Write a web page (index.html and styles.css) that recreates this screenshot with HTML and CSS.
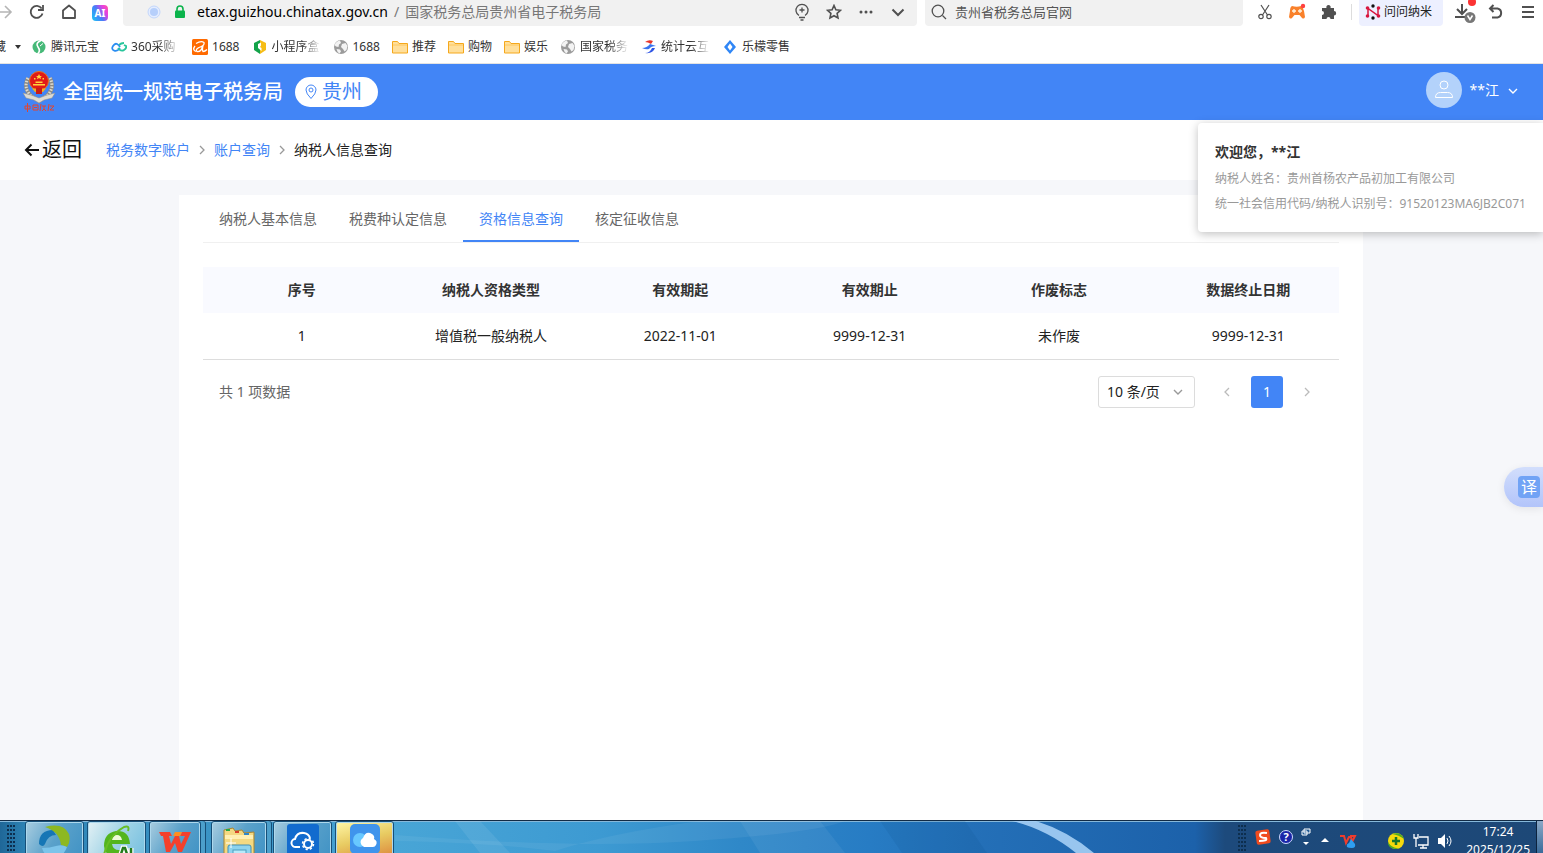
FILE: index.html
```html
<!DOCTYPE html>
<html lang="zh-CN">
<head>
  <meta charset="UTF-8">
  <meta name="viewport" content="width=device-width, initial-scale=1.0">
  <title>纳税人信息查询</title>
  <link rel="stylesheet" href="styles.css">
</head>
<body>
  <svg width="0" height="0" class="defs" aria-hidden="true">
    <symbol id="folder" viewBox="0 0 16 16"><path d="M.5 2.500h5l1.500 2h8.500V14H.5z" fill="#ffdf9b" stroke="#f5a81c"/><path d="M1 6h14" stroke="#ffc85e"/></symbol>
    <symbol id="globe" viewBox="0 0 16 16"><circle cx="8" cy="8" r="7" fill="#9b9b9b"/><path d="M1.500 6Q3 2 7 1.500L8 4 6 5.500 5.500 8 3 7.500zM9 5l3.500-1 2 3-1 4-2 1.500L10 10 8 8zM3.500 10l3.500.5 1 2L6.500 14.500Q4 13 3.500 10z" fill="#f3f3f3"/></symbol>
    <symbol id="left" viewBox="0 0 12 12"><path d="M8 2 4 6l4 4" fill="none" stroke="currentColor" stroke-width="1.300"/></symbol>
    <symbol id="right" viewBox="0 0 12 12"><path d="m4 2 4 4-4 4" fill="none" stroke="currentColor" stroke-width="1.300"/></symbol>
    <symbol id="down" viewBox="0 0 12 12"><path d="m2 5 4 4 4-4" fill="none" stroke="currentColor" stroke-width="1.400"/></symbol>
  </svg>

  <!-- browser -->
  <div class="browser">
    <div class="toolbar">
      <div class="tools tools-left">
        <button aria-label="前进"><svg width="16" height="16" viewBox="0 0 16 16" fill="none" stroke="#b5b5b5" stroke-width="1.600"><path d="M1 8h13M8 2l6 6-6 6"/></svg></button>
        <button aria-label="刷新"><svg width="16" height="16" viewBox="0 0 16 16" fill="none" stroke="#505050" stroke-width="1.800"><path d="M13.500 9.500a6 6 0 1 1-.8-5"/><path d="M14 1v5H9"/></svg></button>
        <button aria-label="主页"><svg width="16" height="16" viewBox="0 0 16 16" fill="none" stroke="#505050" stroke-width="1.800"><path d="M2 14V6.500L8 1.500l6 5V14z" stroke-linejoin="round"/></svg></button>
        <button aria-label="AI" class="ai">AI</button>
      </div>
      <div class="address">
        <svg width="14" height="14" viewBox="0 0 14 14"><circle cx="7" cy="7" r="6" fill="#e4edff" stroke="#c3d6fb"/><circle cx="7" cy="7" r="4" fill="#b6cffb"/></svg>
        <svg class="lock" width="12" height="14" viewBox="0 0 12 14"><path d="M3 6V4a3 3 0 0 1 6 0v2" fill="none" stroke="#0bb34b" stroke-width="1.600"/><rect x="1" y="5.500" width="10" height="7.500" rx="1" fill="#0bb34b"/></svg>
        <p class="url">etax.guizhou.chinatax.gov.cn<span>/</span><span>国家税务总局贵州省电子税务局</span></p>
        <div class="tools">
          <button aria-label="提示"><svg width="16" height="18" viewBox="0 0 16 18" fill="none" stroke="#505050" stroke-width="1.300"><path d="M5 12.500a6 6 0 1 1 6 0M8 4.500v5M5.500 7h5M5 14.500h6M6.500 17h3"/></svg></button>
          <button aria-label="收藏"><svg width="16" height="16" viewBox="0 0 16 16" fill="none" stroke="#505050" stroke-width="1.600"><path d="m8 1.500 1.900 4.300 4.600.5-3.400 3.100.9 4.600L8 11.700 4 14l.9-4.600L1.500 6.300l4.600-.5z"/></svg></button>
          <button aria-label="更多"><svg width="14" height="4" viewBox="0 0 14 4" fill="#505050"><circle cx="2" cy="2" r="1.500"/><circle cx="7" cy="2" r="1.500"/><circle cx="12" cy="2" r="1.500"/></svg></button>
          <button aria-label="展开"><svg width="14" height="14" viewBox="0 0 14 14" fill="none" stroke="#505050" stroke-width="2"><path d="m1.500 4.500 5.500 5.500 5.500-5.500"/></svg></button>
        </div>
      </div>
      <div class="search">
        <svg width="16" height="16" viewBox="0 0 16 16" fill="none" stroke="#505050" stroke-width="1.300"><circle cx="7" cy="7" r="5.800"/><path d="m11.500 11.500 3.500 3.500"/></svg>
        <input type="text" aria-label="搜索" value="贵州省税务总局官网">
      </div>
      <div class="tools">
        <button aria-label="截图"><svg width="16" height="16" viewBox="0 0 16 16" fill="none" stroke="#505050" stroke-width="1.200"><path d="m4 1 6.500 10M12 1 5.500 11"/><circle cx="4" cy="12.500" r="2.200"/><circle cx="12" cy="12.500" r="2.200"/></svg></button>
        <button aria-label="游戏"><svg width="18" height="18" viewBox="0 0 18 18"><path d="M4 3q5 1.500 9 0 2 1 3 5l1 6q-1 2.500-3 1l-2.500-3h-5L4 15q-2 1.500-3-1l1-6q0-4 2-5z" fill="#f9812b"/><path d="M4 8h4M6 6v4M10 8h4M12 6v4" stroke="#fff3e0" stroke-width="1.300"/><circle cx="15" cy="3" r="2.200" fill="#ff4040"/></svg></button>
        <button aria-label="扩展"><svg width="16" height="16" viewBox="0 0 16 16" fill="#505050"><path d="M1 4h4.500a2.200 2.200 0 1 1 4 0H13v3a2.200 2.200 0 1 1 0 4.400V15H9.500a2 2 0 0 0-4 0H1v-4a2 2 0 0 0 0-4z"/></svg></button>
      </div>
      <i class="divider"></i>
      <button class="nami">
        <svg width="16" height="16" viewBox="0 0 16 16"><path d="M3 12V4.500l10 7V4" fill="none" stroke="#d8173f" stroke-width="1.500"/><g fill="#d8173f"><circle cx="2.500" cy="4" r="1.800"/><circle cx="2.500" cy="12" r="1.800"/><circle cx="13.500" cy="4" r="1.800"/><circle cx="13.500" cy="12" r="1.800"/></g><circle cx="8" cy="2" r="1.700" fill="#111"/><circle cx="8" cy="14" r="1.700" fill="#111"/></svg>
        问问纳米
      </button>
      <div class="tools">
        <button aria-label="下载"><svg width="24" height="24" viewBox="0 0 24 24" fill="none"><path d="M10 4v10M5 9l5 5 5-5M3 17h13" stroke="#505050" stroke-width="2"/><circle cx="18" cy="17.500" r="5.500" fill="#777"/><path d="m15.500 15.500 2.500 4 2.500-4" stroke="#fff" stroke-width="1.500"/><circle cx="20" cy="2" r="4" fill="#fb3434"/></svg></button>
        <button aria-label="撤销"><svg width="16" height="16" viewBox="0 0 16 16" fill="none" stroke="#505050" stroke-width="2"><path d="M5.500 1 2 4.500 5.500 8M2 4.500h7.500a4.600 4.600 0 0 1 0 9H4"/></svg></button>
        <button aria-label="菜单"><svg width="14" height="14" viewBox="0 0 14 14" stroke="#505050" stroke-width="1.800"><path d="M1 2h12M1 7h12M1 12h12"/></svg></button>
      </div>
    </div>
    <nav class="bookmarks">
      <a href="#" class="fav">藏<i></i></a>
      <a href="#"><svg viewBox="0 0 16 16"><circle cx="8" cy="8" r="6.500" fill="#46b978"/><path d="M10 1.500Q4 4 7 8t-.5 7" fill="none" stroke="#fff" stroke-width="1.600"/><path d="m9 7 3-2.500" stroke="#fff"/></svg><span>腾讯元宝</span></a>
      <a href="#"><svg viewBox="0 0 16 16" fill="none" stroke-width="1.800"><path d="M9 9Q6 13 3 11.500T2 7t4-2 3 3" stroke="#2a8df2"/><path d="M7 9q3 4 6 2t2-4l-2-1M8 6q2-2 5-2" stroke="#28c59b"/></svg><span class="fade">360采购</span></a>
      <a href="#"><svg viewBox="0 0 16 16"><rect width="16" height="16" rx="1.500" fill="#ff6a00"/><path d="M4 4.500q5-3 8-1 1 3-5 5-4 2-2 4 4 1 6-6-1 5 0 6 2 0 4-2M3 7q-3 4 1 5.500" fill="none" stroke="#fff" stroke-width="1.300"/></svg><span>1688</span></a>
      <a href="#"><svg viewBox="0 0 16 16"><path d="M8 1 2 4v7l6 4z" fill="#13a34a"/><path d="m8 1 6 3v7l-6 4z" fill="#f6bd16"/><path d="m6 5 3-1.500v3L8 8l1.500 1v3L6 9z" fill="#fff"/></svg><span class="fade">小程序盒</span></a>
      <a href="#"><svg><use href="#globe"/></svg><span>1688</span></a>
      <a href="#"><svg><use href="#folder"/></svg><span>推荐</span></a>
      <a href="#"><svg><use href="#folder"/></svg><span>购物</span></a>
      <a href="#"><svg><use href="#folder"/></svg><span>娱乐</span></a>
      <a href="#"><svg><use href="#globe"/></svg><span class="fade">国家税务</span></a>
      <a href="#"><svg viewBox="0 0 16 16"><path d="M4 3q4-3 8-1l-2 3Q7 3 4 3z" fill="#e8352b"/><path d="M1 9q5 0 8-4l6 2q-5 0-7 3-3 1-7-1z" fill="#3974ef"/><path d="M4 14q5 0 7-5h3q-2 6-10 5z" fill="#3056e5"/></svg><span class="fade">统计云互</span></a>
      <a href="#"><svg viewBox="0 0 16 16"><path d="m8 1 6 7-6 7-6-7z" fill="#2f86f6"/><path d="m8 4.500 2.500 3.500L8 11.500 5.500 8z" fill="#fff"/></svg><span>乐檬零售</span></a>
    </nav>
  </div>

  <header class="header">
    <svg class="emblem" width="34" height="44" viewBox="0 0 34 44">
      <path d="M6 8Q1 18 9 26l8 5 8-5q8-8 3-18" fill="none" stroke="#8d8a82" stroke-width="4"/>
      <path d="M6 8Q1 18 9 26l8 5 8-5q8-8 3-18" fill="none" stroke="#dedbd2" stroke-width="3" stroke-dasharray="1.500 1.500"/>
      <path d="m1 23 8 2 8 3 8-3 8-2-3 5-8 2-5 3-5-3-8-2z" fill="#dcdad3" stroke="#8f8d86" stroke-width=".5"/>
      <circle cx="17" cy="11" r="9.500" fill="#e01a17" stroke="#e8761e"/>
      <path d="m17 4 1 2h2l-1.500 1.200.5 2-2-1.200-2 1.200.5-2L14 6h2zM12 8h1.500v1.500H12zM20.500 8H22v1.500h-1.500zM11 14h12v1.500H11zM13.500 11.500h7V13h-7z" fill="#ffd33c"/>
      <path d="M10 18.500h14l-3 3.500h-8z" fill="#f1ae23"/><path d="M14 18h6v6h-6z" fill="#c81c17"/>
      <path d="M3 36h5v3H3zM5.500 33v9M11 35h5v5h-5zM12 37.500h3M19 34l-1 7M20 36h4M22 36v3l-2 2M22 39l2 2M27 34l-1 7M28 36h4l-4 4h4" fill="none" stroke="#e2452f"/>
    </svg>
    <h1>全国统一规范电子税务局</h1>
    <button class="region">
      <svg width="12" height="16" viewBox="0 0 12 16" fill="none" stroke="#4285f6"><path d="M6 14.500Q1 9.500 1 6a5 5 0 0 1 10 0q0 3.500-5 8.500z"/><circle cx="6" cy="6" r="2"/></svg>
      贵州
    </button>
    <button class="user">
      <span class="avatar"><svg width="20" height="20" viewBox="0 0 20 20" fill="none" stroke="#fff"><circle cx="10" cy="5" r="4"/><path d="M1.500 17.500q0-5 5-5h7q5 0 5 5z"/></svg></span>
      **江
      <svg width="12" height="12"><use href="#down"/></svg>
    </button>
    <div class="user-panel">
      <strong>欢迎您，**江</strong>
      <p>纳税人姓名：贵州首杨农产品初加工有限公司</p>
      <p>统一社会信用代码/纳税人识别号：91520123MA6JB2C071</p>
    </div>
  </header>

  <nav class="crumbs">
    <a href="#" class="back"><svg width="16" height="14" viewBox="0 0 16 14" fill="none" stroke="#111" stroke-width="2"><path d="M15 7H2M7.500 1.500 2 7l5.500 5.500"/></svg>返回</a>
    <a href="#">税务数字账户</a>
    <svg width="12" height="12"><use href="#right"/></svg>
    <a href="#">账户查询</a>
    <svg width="12" height="12"><use href="#right"/></svg>
    <span>纳税人信息查询</span>
  </nav>

  <main>
    <div class="card">
      <div class="tabs">
        <button>纳税人基本信息</button>
        <button>税费种认定信息</button>
        <button class="active">资格信息查询</button>
        <button>核定征收信息</button>
      </div>
      <table>
        <thead>
          <tr><th>序号</th><th>纳税人资格类型</th><th>有效期起</th><th>有效期止</th><th>作废标志</th><th>数据终止日期</th></tr>
        </thead>
        <tbody>
          <tr><td>1</td><td>增值税一般纳税人</td><td>2022-11-01</td><td>9999-12-31</td><td>未作废</td><td>9999-12-31</td></tr>
        </tbody>
      </table>
      <div class="pagination">
        <span class="total">共 1 项数据</span>
        <div class="page-size">
          <select aria-label="每页条数"><option>10 条/页</option></select>
          <svg width="12" height="12"><use href="#down"/></svg>
        </div>
        <button aria-label="上一页"><svg width="12" height="12"><use href="#left"/></svg></button>
        <button class="current">1</button>
        <button aria-label="下一页"><svg width="12" height="12"><use href="#right"/></svg></button>
      </div>
    </div>
    <button class="translate"><span>译</span></button>
  </main>

  <!-- windows taskbar -->
  <footer class="taskbar">
    <svg class="streaks" viewBox="0 0 1543 32" preserveAspectRatio="none" aria-hidden="true">
      <path d="M395 14q180 14 300 6t150-20H700q-90 12-145 30-60-8-160-10z" fill="#fff" opacity=".06"/>
      <path d="M455 0h25l30 32h-30z" fill="#fff" opacity=".08"/>
      <path d="M740 0h80l25 32h-85z" fill="#fff" opacity=".06"/>
      <path d="M880 0h85l22 32h-85z" fill="#0b4d82" opacity=".12"/>
      <path d="M1012 0h24q32 10 58 32h-18q-30-24-64-32z" fill="#a5cff5" opacity=".9"/>
    </svg>
    <i class="grip"></i>
    <button class="app" aria-label="浏览器"><svg width="36" height="36" viewBox="0 0 36 36"><path d="M2 20Q2 6 16 6l3 5q-8 0-11 9-2 4-6 0z" fill="#1676b5"/><path d="M8 3q18-5 24 7 2 8-2 13l-6-2Q22 7 8 3z" fill="#8db821"/><path d="M5 24q8 0 14-2t11 1q-4 11-14 11Q7 32 5 24z" fill="#7cc4ea"/></svg></button>
    <button class="app light" aria-label="360浏览器"><svg width="36" height="36" viewBox="0 0 36 36"><path d="M31 20H13q1 6 7 6h4l-2 8Q6 34 5 22 5 9 17 7q13-1 14 13z" fill="#53b51d"/><path d="M13 16h10q-1-5-5-5t-5 5z" fill="#eefad9"/><path d="M5 31Q9 12 25 3q6-2 4 4" fill="none" stroke="#67bd24" stroke-width="2"/><path d="m20 36 4-12h2l4 12M22 32h6M32 24v10" fill="none" stroke="#fff" stroke-width="5"/><path d="m20 36 4-12h2l4 12M22 32h6M32 24v10" fill="none" stroke="#247b1b" stroke-width="2.500"/></svg></button>
    <button class="app stack" aria-label="WPS"><svg width="36" height="36" viewBox="0 0 36 36"><path d="M2 8h11l2 4h-3l2 8 4-8h4l2 8 4-8h-5l2-4h9l-9 20h-4l-3-9-5 9H9L6 12H4z" fill="#f4402c"/><path d="M18 8h7l-2 4h-7z" fill="#ff8e20"/></svg></button>
    <button class="app stack" aria-label="资源管理器"><svg width="36" height="36" viewBox="0 0 36 36"><path d="m3 6 9-2 2 3 7-1 2 3 10-1v28H3z" fill="#f4d982" stroke="#a88431"/><path d="M5 5h4v2H5z" fill="#27a840"/><path d="M14 7h4v2h-4z" fill="#d8402b"/><path d="M23 9h5v2h-5z" fill="#2f86c8"/><path d="M4 13h28" stroke="#fff0b4" stroke-width="4"/><rect x="7" y="21" width="23" height="18" rx="2" fill="#8ed3ee" stroke="#438fb5"/><rect x="12" y="26" width="13" height="12" fill="#b7eafa" stroke="#4d9ebe"/><path d="M10 14v10M5 19h10" stroke="#fff"/></svg></button>
    <button class="app" aria-label="云设置"><svg width="32" height="32" viewBox="0 0 32 32"><rect width="32" height="36" rx="3" fill="#126bce"/><path d="M13 23H9a4 4 0 0 1-1-8q2-7 9-6 5 1 6 5" fill="none" stroke="#fff" stroke-width="2"/><circle cx="21" cy="20" r="4" fill="none" stroke="#fff" stroke-width="2"/><circle cx="21" cy="20" r="5.500" fill="none" stroke="#fff" stroke-width="1.500" stroke-dasharray="2.200 2.120"/></svg></button>
    <button class="app hot" aria-label="云盘"><svg width="30" height="30" viewBox="0 0 30 30"><rect width="30" height="30" rx="5" fill="#3f94ec"/><circle cx="10" cy="16" r="7" fill="#68c8ff"/><path d="M14 23a5 5 0 0 1-1-9q3-8 9-4 3 2 2 5 4 2 2 6-1 2-3 2z" fill="#fff"/></svg></button>
    <div class="tray">
      <i class="grip"></i>
      <svg width="16" height="16" viewBox="0 0 16 16"><rect x="1" y="1" width="14" height="14" rx="2" fill="#f04b1e" transform="rotate(-8 8 8)"/><path d="M12 4Q5 3 5 6t6 3q2 3-7 3" fill="none" stroke="#fff" stroke-width="2"/></svg>
      <span class="help">?</span>
      <svg width="10" height="18" viewBox="0 0 10 18"><path d="M3 1h6v4H3zM1 3h5v4H1z" fill="#235a92" stroke="#fff"/><path d="M2 14h6l-3 3z" fill="#fff"/></svg>
      <svg class="up" width="8" height="6" viewBox="0 0 8 6"><path d="m0 5 4-4 4 4z" fill="#fff"/></svg>
      <svg class="wps" width="18" height="16" viewBox="0 0 18 16"><path d="M1 3h4l2 7 3-6h2l1 5 3-6h-5" fill="none" stroke="#f13c2c" stroke-width="2"/><path d="m12 6 4 5q1 4-3 4t-5-1q-1-3 2-4z" fill="#2f9ff2"/></svg>
      <svg class="plus" width="18" height="18" viewBox="0 0 18 18"><circle cx="9" cy="9" r="8" fill="#f5d90c"/><path d="M1 10q0 7 8 7l4-1q-8 1-12-6zM5 2q9-3 12 5-5-4-12-5z" fill="#4eac21"/><path d="M9 5v8M5 9h8" stroke="#17752a" stroke-width="2.500"/></svg>
      <svg width="16" height="16" viewBox="0 0 16 16" fill="none" stroke="#fff" stroke-width="1.300"><path d="M6 4h9v8H5M7 15h7M10 12v3M1 1v4h4V1M3 5v9"/></svg>
      <svg width="16" height="16" viewBox="0 0 16 16"><path d="M1 5h3l4-4v14l-4-4H1z" fill="#fff"/><path d="M10 5q2 3 0 6M12 3q4 5 0 10" fill="none" stroke="#fff"/></svg>
      <div class="clock">17:24<br>2025/12/25</div>
      <i class="desktop"></i>
    </div>
  </footer>
</body>
</html>
```
FILE: styles.css
```css
* {
  box-sizing: border-box;
}
body {
  margin: 0;
  height: 100vh;
  display: flex;
  flex-direction: column;
  overflow: hidden;
  font-family: 'Noto Sans', 'Noto Sans CJK SC', sans-serif;
  font-size: 14px;
  line-height: 20px;
  color: #222;
  background: #f6f7fa;
}
button, input, select {
  font: inherit;
  color: inherit;
  border: 0;
  padding: 0;
  background: none;
}
a {
  color: inherit;
  text-decoration: none;
}
p, h1 {
  margin: 0;
}
svg {
  flex: none;
}
.defs {
  position: absolute;
}

/* browser */
.browser {
  flex: none;
  background: #fff;
  border-bottom: 1px solid #e3e3e3;
}
.toolbar {
  display: flex;
  height: 26px;
}
.tools {
  display: flex;
}
.tools button {
  width: 32px;
  height: 24px;
  display: flex;
  align-items: center;
  justify-content: center;
}
.tools-left {
  margin: 0 7px 0 -11px;
}
.tools .ai {
  width: 16px;
  height: 16px;
  margin: 5px 8px 0 7px;
  border-radius: 4px;
  color: #fff;
  font-size: 10px;
  font-weight: bold;
  background: linear-gradient(60deg, #18c8f4, #4b7bf8 45%, #e83fe0 75%, #ff5b9c);
}
.address {
  flex: 1;
  min-width: 0;
  display: flex;
  align-items: center;
  padding: 0 3px 2px 24px;
  background: #f1f1f1;
  border-radius: 0 0 4px 4px;
}
.lock {
  margin: 0 11px 0 13px;
}
.url {
  flex: 1;
  overflow: hidden;
  white-space: nowrap;
  color: #000;
}
.url span {
  margin-left: 6px;
  color: #777;
}
.search {
  flex: 0 1 318px;
  display: flex;
  align-items: center;
  gap: 8px;
  margin: 0 6px 0 8px;
  padding: 0 6px 2px;
  background: #f1f1f1;
  border-radius: 0 0 4px 4px;
}
.search input {
  flex: 1;
  min-width: 0;
  font-size: 13px;
  color: #555;
}
.divider {
  width: 1px;
  height: 16px;
  margin: 4px 7px 0 6px;
  background: #ddd;
}
.nami {
  display: flex;
  align-items: center;
  gap: 3px;
  width: 84px;
  margin-right: 5px;
  padding: 0 6px 2px;
  font-size: 12px;
  white-space: nowrap;
  background: #edf0ff;
  border-radius: 0 0 4px 4px;
}
.nami + .tools {
  margin-right: -1px;
}
.bookmarks {
  display: flex;
  align-items: center;
  gap: 12px;
  height: 37px;
  padding-top: 4px;
  font-size: 12px;
  color: #333;
  overflow: hidden;
}
.bookmarks a {
  display: flex;
  align-items: center;
  gap: 4px;
  white-space: nowrap;
}
.bookmarks svg {
  width: 16px;
  height: 16px;
}
.bookmarks .fade {
  width: 49px;
  -webkit-mask-image: linear-gradient(90deg, #000 60%, transparent);
  mask-image: linear-gradient(90deg, #000 60%, transparent);
}
.bookmarks .fav {
  gap: 9px;
  margin: 0 -2px 0 -6px;
}
.fav i {
  border: 3px solid transparent;
  border-top: 4px solid #333;
  border-bottom: 0;
}

/* site header */
.header {
  flex: none;
  position: relative;
  display: flex;
  align-items: center;
  height: 56px;
  padding: 0 24px 0 22px;
  color: #fff;
  background: #4285f6;
}
.header h1 {
  margin: 0 12px 0 7px;
  font-size: 20px;
  font-weight: 500;
  line-height: 28px;
}
.region {
  display: flex;
  align-items: center;
  gap: 5px;
  height: 30px;
  padding: 0 16px 0 10px;
  border-radius: 15px;
  font-size: 20px;
  color: #4285f6;
  background: #fff;
}
.user {
  display: flex;
  align-items: center;
  gap: 8px;
  margin: 0 0 4px auto;
}
.avatar {
  display: flex;
  align-items: center;
  justify-content: center;
  width: 36px;
  height: 36px;
  border-radius: 50%;
  background: #b3d2fb;
}
.user-panel {
  position: absolute;
  z-index: 2;
  top: 59px;
  right: 0;
  width: 345px;
  padding: 19px 0 16px 17px;
  border-radius: 4px 0 0 4px;
  color: #999;
  font-size: 12px;
  line-height: 25px;
  white-space: nowrap;
  background: #fff;
  box-shadow: 0 2px 10px rgba(0, 0, 0, .25);
}
.user-panel strong {
  display: block;
  margin-bottom: 4px;
  font-size: 14px;
  line-height: 20px;
  color: #333;
}

.crumbs {
  flex: none;
  display: flex;
  align-items: center;
  gap: 6px;
  height: 60px;
  padding-left: 24px;
  background: #fff;
}
.crumbs a {
  color: #4285f6;
}
.crumbs .back {
  display: flex;
  align-items: center;
  gap: 2px;
  margin-right: 18px;
  font-size: 20px;
  line-height: 24px;
  color: #111;
}
.crumbs > svg {
  color: #999;
}

main {
  flex: 1;
  min-height: 0;
  position: relative;
  display: flex;
  padding: 15px 180px 0 179px;
}
.card {
  flex: 1;
  padding: 0 24px;
  background: #fff;
}
.tabs {
  display: flex;
  height: 48px;
  margin-bottom: 24px;
  border-bottom: 1px solid #f0f0f0;
}
.tabs button {
  padding: 2px 16px 0;
  color: #666;
  border-bottom: 2px solid transparent;
}
.tabs .active {
  color: #4285f6;
  border-bottom-color: #4285f6;
}
table {
  width: 100%;
  table-layout: fixed;
  border-collapse: collapse;
  text-align: center;
}
th, td {
  height: 46px;
  padding: 0 8px 0 16px;
}
th {
  color: #333;
  background: #f9faff;
}
td {
  border-bottom: 1px solid #ddd;
}
.pagination {
  display: flex;
  align-items: center;
  gap: 8px;
  padding: 16px;
  color: #666;
}
.total {
  margin-right: auto;
}
.page-size {
  position: relative;
  margin-right: 8px;
}
.page-size select {
  appearance: none;
  width: 97px;
  height: 32px;
  padding-left: 8px;
  border: 1px solid #dcdcdc;
  border-radius: 3px;
  color: #222;
  background: #fff;
}
.page-size svg {
  position: absolute;
  right: 11px;
  top: 9px;
  color: #999;
}
.pagination button {
  display: flex;
  align-items: center;
  justify-content: center;
  width: 32px;
  height: 32px;
  border-radius: 3px;
  color: #bbb;
}
.pagination .current {
  color: #fff;
  background: #4285f6;
}
.translate {
  position: absolute;
  right: 0;
  top: 287px;
  width: 39px;
  height: 40px;
  padding-left: 14px;
  text-align: left;
  border-radius: 20px 0 0 20px;
  background: linear-gradient(#d2defc, #b2c4fa);
  box-shadow: 0 2px 8px rgba(0, 0, 0, .08);
}
.translate span {
  display: block;
  width: 22px;
  border-radius: 4px;
  font-size: 16px;
  line-height: 22px;
  text-align: center;
  color: #fff;
  background: #71a3f5;
}

/* taskbar */
.taskbar {
  flex: none;
  position: relative;
  display: flex;
  gap: 3px;
  height: 33px;
  overflow: hidden;
  border-top: 1px solid #122b45;
  box-shadow: inset 0 1px #86b8da;
  background: linear-gradient(90deg, #1f6798 0, #2d83b5 26px, #48a5d6 395px, #3d9ad2 600px, #2f88c8 740px, #277cc4 870px, #2470b8 970px, #1c61aa 1195px, #1d4a7c 1225px, #1d4877);
}
.streaks {
  position: absolute;
  width: 100%;
  height: 100%;
}
.grip {
  position: relative;
  width: 8px;
  margin: 4px 7px 0;
  background: radial-gradient(circle at 1px 1px, #0d2e4e 1px, transparent 1px) 0 0 / 3px 4px;
}
.app {
  position: relative;
  width: 59px;
  height: 36px;
  display: flex;
  justify-content: center;
  border: 1px solid #164f78;
  border-radius: 3px;
  background: linear-gradient(120deg, #a9cde0, #5aa1ca 50%, #4193c5);
  box-shadow: inset 0 0 0 1px #add8ed;
}
.app svg {
  margin-top: 2px;
}
.light {
  background: linear-gradient(120deg, #e3f1f5, #a2d4e6 50%, #75bfe0);
}
.stack {
  width: 52px;
  margin-right: 7px;
  box-shadow: inset 0 0 0 1px #add8ed, 4px 0 #4c9fcb, 5px 0 #164f78;
}
.stack + .stack {
  width: 56px;
  margin-right: 3px;
}
.hot {
  background: linear-gradient(165deg, #fff7a7, #e8cb62 50%, #dd8a3d);
}
.tray {
  position: relative;
  display: flex;
  align-items: center;
  gap: 8px;
  margin-left: auto;
  color: #fff;
}
.tray .grip {
  height: 28px;
  margin: 4px 1px 0 0;
}
.help {
  width: 14px;
  height: 14px;
  border: 1px solid #cfd9ff;
  border-radius: 50%;
  font-size: 11px;
  font-weight: bold;
  line-height: 12px;
  text-align: center;
  background: #1a25a8;
}
.up {
  margin: 6px 2px 0;
}
.wps {
  margin-top: 8px;
}
.plus {
  margin: 8px 0 0 22px;
}
.plus ~ svg {
  margin-top: 8px;
}
.clock {
  align-self: flex-start;
  margin: 2px 0 0 5px;
  font-size: 12px;
  line-height: 18px;
  text-align: center;
}
.desktop {
  align-self: stretch;
  width: 7px;
  margin-left: -2px;
  border-left: 1px solid #0c233e;
  background: linear-gradient(#8ba9c7, #396b9a);
}
```
